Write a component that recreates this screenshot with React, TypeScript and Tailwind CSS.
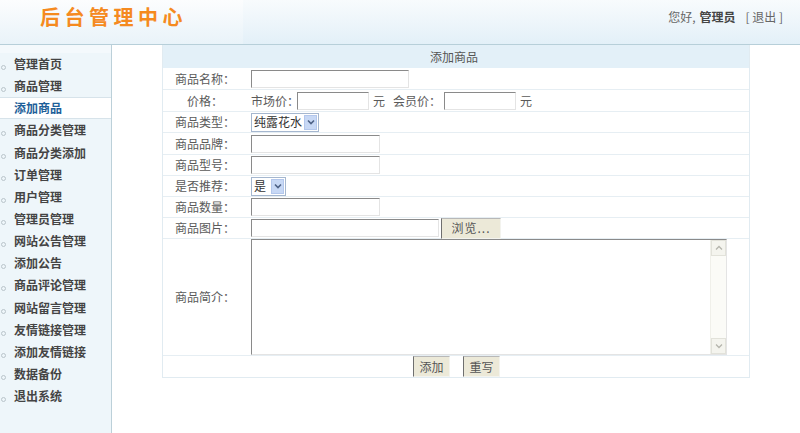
import React from "react";

const font = { fontFamily: '"Noto Sans CJK SC", "Noto Sans", sans-serif' };

const menu = [
  "管理首页",
  "商品管理",
  "添加商品",
  "商品分类管理",
  "商品分类添加",
  "订单管理",
  "用户管理",
  "管理员管理",
  "网站公告管理",
  "添加公告",
  "商品评论管理",
  "网站留言管理",
  "友情链接管理",
  "添加友情链接",
  "数据备份",
  "退出系统",
];

function Input({ w }: { w: string }) {
  return (
    <div
      className={`${w} h-[18px] bg-white border border-t-[#8a8a8a] border-l-[#8a8a8a] border-b-[#e4e4e4] border-r-[#e4e4e4]`}
    />
  );
}

function Select({ label, w }: { label: string; w: string }) {
  return (
    <div
      className={`${w} h-[19px] flex items-center bg-white border border-[#a5b7cf] pl-[2px] pr-[1px]`}
    >
      <span className="flex-1 text-[12px] leading-none text-[#333] whitespace-nowrap">{label}</span>
      <div className="w-[13px] h-[15px] shrink-0 bg-[#c7d8f5] border border-[#b3c7ec] flex items-center justify-center">
        <svg width="8" height="6" viewBox="0 0 8 6">
          <path d="M1 1.5 L4 4.5 L7 1.5" stroke="#4d6185" strokeWidth="1.6" fill="none" />
        </svg>
      </div>
    </div>
  );
}

function Row({
  label,
  h,
  children,
  last,
}: {
  label: string;
  h: string;
  children?: React.ReactNode;
  last?: boolean;
}) {
  return (
    <div className={`flex ${h} ${last ? "" : "border-b border-[#e6eef3]"}`}>
      <div className="w-[84px] flex items-center justify-center text-[12px] text-[#5a5a5a]">
        {label}
      </div>
      <div className="flex-1 flex items-center pl-[4px] text-[12px] text-[#5a5a5a]">
        {children}
      </div>
    </div>
  );
}

function XpButton({ children, w }: { children: React.ReactNode; w: string }) {
  return (
    <div
      className={`${w} h-[21px] bg-[#ece9d8] border border-t-[#b8b8b8] border-l-[#6f6f6f] border-b-[#f3f3ee] border-r-[#f3f3ee] flex items-center justify-center text-[12px] text-[#555]`}
    >
      {children}
    </div>
  );
}

export default function App() {
  return (
    <div className="w-[800px] h-[433px] bg-white overflow-hidden flex flex-col" style={font}>
      {/* header */}
      <div className="h-[45px] shrink-0 flex items-center justify-between bg-gradient-to-b from-[#f8fbfd] to-[#e3f0f8] border-b border-[#b7cfd9]">
        <div className="h-full w-[243px] flex items-center pl-[40px] bg-gradient-to-b from-[#fcfdfe] to-[#e9f3f9]">
          <span className="text-[20px] leading-none font-bold tracking-[4.5px] text-[#f58a1f] -mt-[10px]">
            后台管理中心
          </span>
        </div>
        <div className="pr-[17px] -mt-[10px] text-[12px] text-[#666] flex items-center">
          <span>您好,</span>
          <span className="ml-[4px] font-bold text-[#444]">管理员</span>
          <span className="ml-[10px]">[ 退出 ]</span>
        </div>
      </div>

      <div className="flex flex-1 min-h-0">
        {/* sidebar */}
        <div className="w-[112px] shrink-0 border-r border-[#bcd0d9] bg-[#f4f9fc] flex flex-col pt-[8px]">
          {menu.map((m, i) => {
            const active = i === 2;
            return (
              <div
                key={m}
                className={`h-[22.15px] flex items-center pl-[14px] relative text-[12px] font-bold ${
                  active
                    ? "bg-white text-[#1e5f99] border-y border-[#d7e3ea]"
                    : "text-[#444] bg-[#eef6fa]"
                }`}
              >
                {!active && (
                  <span className="absolute left-[1px] top-[12px] w-[5px] h-[5px] rounded-full border border-[#b9c4ca]" />
                )}
                {m}
              </div>
            );
          })}
          <div className="flex-1 bg-[#eef6fa]" />
        </div>

        {/* main */}
        <div className="flex-1 pl-[50px] pr-[50px]">
          <div className="w-[588px] border border-[#e1ebf1] border-t-0">
            <div className="h-[23px] bg-[#e3f0f8] flex items-center justify-center text-[12px] text-[#555]">
              <span className="ml-[-4px]">添加商品</span>
            </div>
            <Row label="商品名称：" h="h-[22px]">
              <Input w="w-[158px]" />
            </Row>
            <Row label="价格：" h="h-[22px]">
              <span className="w-[46px] whitespace-nowrap">市场价：</span>
              <Input w="w-[72px]" />
              <span className="ml-[4px]">元</span>
              <span className="ml-[8px] w-[51px] whitespace-nowrap">会员价：</span>
              <Input w="w-[72px]" />
              <span className="ml-[4px]">元</span>
            </Row>
            <Row label="商品类型：" h="h-[21px]">
              <Select label="纯露花水" w="w-[68px]" />
            </Row>
            <Row label="商品品牌：" h="h-[22px]">
              <Input w="w-[129px]" />
            </Row>
            <Row label="商品型号：" h="h-[21px]">
              <Input w="w-[129px]" />
            </Row>
            <Row label="是否推荐：" h="h-[21px]">
              <Select label="是" w="w-[35px]" />
            </Row>
            <Row label="商品数量：" h="h-[21px]">
              <Input w="w-[129px]" />
            </Row>
            <Row label="商品图片：" h="h-[21px]">
              <div className="flex items-center gap-[2px]">
                <Input w="w-[188px]" />
                <XpButton w="w-[60px]">
                  <span className="tracking-[1px]">浏览...</span>
                </XpButton>
              </div>
            </Row>
            <Row label="商品简介：" h="h-[117px]">
              <div className="w-[476px] h-[116px] bg-white border border-t-[#8a8a8a] border-l-[#8a8a8a] border-b-[#e4e4e4] border-r-[#e4e4e4] flex justify-end">
                <div className="w-[16px] h-full bg-[#fbfbf7] border-l border-[#f0f0ea] flex flex-col justify-between">
                  <div className="h-[16px] bg-[#f4f4ee] border border-[#e2e2da] flex items-center justify-center">
                    <svg width="8" height="6" viewBox="0 0 8 6">
                      <path d="M1 4.5 L4 1.5 L7 4.5" stroke="#b5b5ad" strokeWidth="1.3" fill="none" />
                    </svg>
                  </div>
                  <div className="h-[16px] bg-[#f4f4ee] border border-[#e2e2da] flex items-center justify-center">
                    <svg width="8" height="6" viewBox="0 0 8 6">
                      <path d="M1 1.5 L4 4.5 L7 1.5" stroke="#b5b5ad" strokeWidth="1.3" fill="none" />
                    </svg>
                  </div>
                </div>
              </div>
            </Row>
            <div className="h-[21px] flex items-center">
              <div className="ml-[250px] flex gap-[13px]">
                <XpButton w="w-[37px]">添加</XpButton>
                <XpButton w="w-[37px]">重写</XpButton>
              </div>
            </div>
          </div>
        </div>
      </div>
    </div>
  );
}
